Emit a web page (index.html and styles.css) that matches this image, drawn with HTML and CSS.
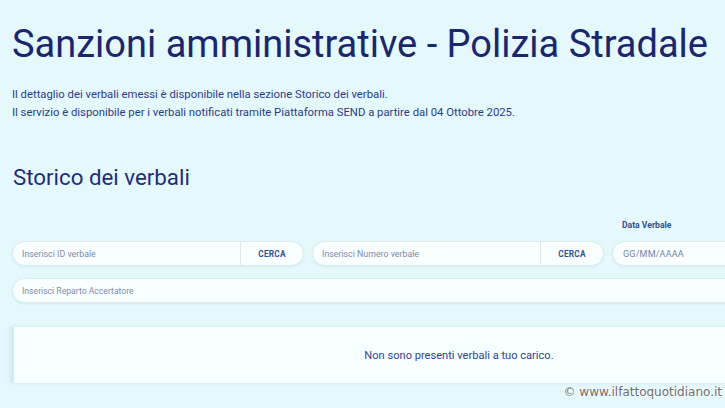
FILE: index.html
```html
<!DOCTYPE html>
<html lang="it">
<head>
<meta charset="utf-8">
<title>Sanzioni amministrative - Polizia Stradale</title>
<link rel="stylesheet" href="styles.css">
</head>
<body>
<main class="page">
  <h1 class="title">Sanzioni amministrative - Polizia Stradale</h1>
  <div class="intro">
    <p>Il dettaglio dei verbali emessi è disponibile nella sezione Storico dei verbali.</p>
    <p>Il servizio è disponibile per i verbali notificati tramite Piattaforma SEND a partire dal 04 Ottobre 2025.</p>
  </div>

  <h2 class="section-title">Storico dei verbali</h2>

  <div class="filters">
    <div class="field">
      <span class="field-label"></span>
      <div class="search-group">
        <span class="search-input">Inserisci ID verbale</span>
        <span class="search-btn">CERCA</span>
      </div>
    </div>
    <div class="field">
      <span class="field-label"></span>
      <div class="search-group">
        <span class="search-input">Inserisci Numero verbale</span>
        <span class="search-btn">CERCA</span>
      </div>
    </div>
    <div class="field">
      <span class="field-label">Data Verbale</span>
      <div class="date-input"><span class="date-text">GG/MM/AAAA</span></div>
    </div>
  </div>

  <div class="wide-input">Inserisci Reparto Accertatore</div>

  <div class="results">Non sono presenti verbali a tuo carico.</div>
</main>
<div class="credit">© www.ilfattoquotidiano.it</div>
</body>
</html>
```
FILE: styles.css
```css
html, body {
  margin: 0;
  height: 100%;
  overflow: hidden;
}

body {
  background: #e5f8fc;
  font-family: Roboto, "Open Sans", sans-serif;
  color: #1c2a7a;
  position: relative;
}

.page {
  width: 892px;
  padding: 21px 0 0 12px;
}

.title {
  margin: 0;
  font-size: 38px;
  line-height: 46px;
  font-weight: 400;
  color: #1a2672;
  white-space: nowrap;
}

.intro {
  margin-top: 19px;
}

.intro p {
  margin: 0;
  font-size: 11.3px;
  line-height: 18px;
  color: #2b3b8c;
  white-space: nowrap;
}

.section-title {
  margin: 41px 0 0 1px;
  font-size: 22.3px;
  line-height: 28px;
  font-weight: 400;
  color: #1e2d7c;
}

.filters {
  margin-top: 28px;
  display: grid;
  grid-template-columns: repeat(3, 1fr);
  column-gap: 8px;
}

.field {
  display: flex;
  flex-direction: column;
  gap: 10px;
}

.field-label {
  display: block;
  height: 12px;
  padding-left: 10px;
  font-size: 8.6px;
  line-height: 12px;
  font-weight: 700;
  color: #34508f;
}

.search-group {
  height: 25px;
  display: flex;
  background: #f9feff;
  border: 1px solid #d9edf3;
  border-radius: 13px;
  box-sizing: border-box;
  box-shadow: 0 1px 2px rgba(150, 200, 215, 0.25);
}

.search-input {
  flex: 1;
  display: flex;
  align-items: center;
  padding-left: 9px;
  font-size: 8.8px;
  color: #7d8cab;
  border-right: 1px solid #dbe8ee;
}

.search-btn {
  width: 62px;
  display: flex;
  align-items: center;
  justify-content: center;
  font-size: 8.3px;
  font-weight: 700;
  letter-spacing: 0.2px;
  color: #2d5397;
}

.date-input {
  height: 25px;
  display: flex;
  align-items: center;
  padding-left: 10px;
  background: #f9feff;
  border: 1px solid #d9edf3;
  border-radius: 13px;
  box-sizing: border-box;
  box-shadow: 0 1px 2px rgba(150, 200, 215, 0.25);
}

.date-text {
  white-space: nowrap;
  font-size: 9px;
  letter-spacing: 0.2px;
  color: #7183a9;
}

.wide-input {
  margin-top: 12px;
  height: 25px;
  display: flex;
  align-items: center;
  padding-left: 9px;
  font-size: 8.65px;
  color: #7d8cab;
  background: #f9feff;
  border: 1px solid #d9edf3;
  border-radius: 13px;
  box-sizing: border-box;
  box-shadow: 0 1px 2px rgba(150, 200, 215, 0.25);
}

.results {
  margin: 24px 0 0 2px;
  height: 56px;
  display: flex;
  align-items: center;
  justify-content: center;
  background: #f6feff;
  font-size: 11.1px;
  color: #2f4592;
  box-shadow: -4px 0 4px rgba(180, 215, 235, 0.45);
}

.credit {
  position: absolute;
  right: 3px;
  bottom: 9px;
  font-family: "DejaVu Sans", sans-serif;
  font-size: 12px;
  color: #6d6d6d;
  text-shadow: 0 0 2px #ffffff, 0 0 2px #ffffff;
}
```
